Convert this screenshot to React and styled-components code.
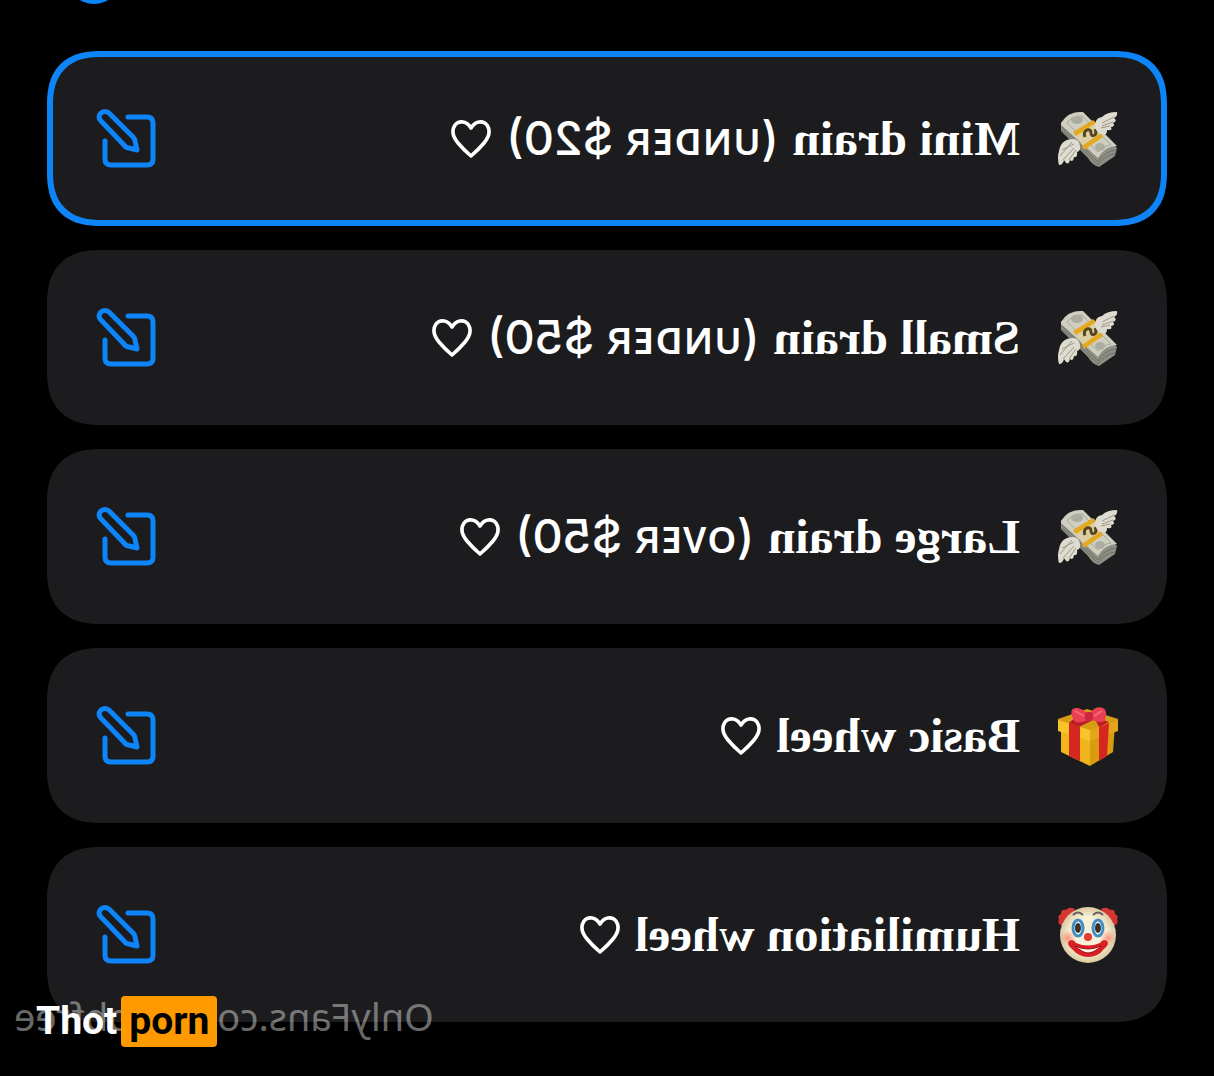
import React from "react";
import styled, { createGlobalStyle } from "styled-components";

const GlobalStyle = createGlobalStyle`
  * { box-sizing: border-box; }
  html, body { margin: 0; background: #000; overflow-x: hidden; }
`;

const Page = styled.main`
  position: relative;
  min-height: 100vh;
  overflow: hidden;
  background: #000;
`;

const Mirrored = styled.div`
  display: flex;
  flex-direction: column;
  gap: 47px;
  padding: 0 47px 53px;
  transform: scaleX(-1);
`;

const Handle = styled.div`
  width: 54px;
  height: 54px;
  margin: -50px 20px 0 0;
  align-self: flex-end;
  border-radius: 50%;
  background: #0d84f8;
`;

const List = styled.ul`
  display: flex;
  flex-direction: column;
  gap: 24px;
  margin: 0;
  padding: 0;
  list-style: none;
`;

const Card = styled.li`
  display: flex;
  align-items: center;
  height: 175px;
  padding: 0 42px;
  border: 6px solid ${(p) => (p.$selected ? "#0d84f8" : "#1c1c1e")};
  border-radius: 54px;
  corner-shape: superellipse(1.3);
  background: #1c1c1e;
`;

const Emoji = styled.svg`
  width: 62px;
  height: 62px;
  flex: none;
`;

const Label = styled.span`
  display: flex;
  align-items: baseline;
  gap: 14px;
  flex: 1;
  margin-left: 37px;
  color: #fff;
  font: 700 49px/62px "Liberation Serif", serif;
  white-space: nowrap;
`;

const Amount = styled.span`
  font: 500 47px/62px Inter, "Noto Sans", sans-serif;
`;

const HeartIcon = styled.svg`
  width: 42px;
  height: 40px;
  align-self: center;
`;

const EditButton = styled.button`
  display: flex;
  flex: none;
  padding: 0;
  border: 0;
  background: none;
  color: #0d84f8;
  cursor: pointer;
`;

const Watermark = styled.p`
  position: absolute;
  left: 14px;
  top: 994px;
  margin: 0;
  color: rgba(255, 255, 255, 0.42);
  font: 400 38px/44px "Noto Sans", sans-serif;
  white-space: nowrap;
  transform: scaleX(-1);
`;

const Brand = styled.div`
  position: absolute;
  left: 36px;
  top: 996px;
  display: flex;
  gap: 4px;
  color: #fff;
  font: 700 39px/51px Roboto, sans-serif;
`;

const BrandTag = styled.span`
  padding: 0 8px;
  border-radius: 4px;
  background: #ff9900;
  color: #000;
`;

function Money() {
  return (
    <Emoji viewBox="0 0 62 62" aria-hidden="true">
      <g transform="translate(62 0) scale(-1 1)">
        <path d="M4 15 Q11 3 24 4 L60 40 58 48 42 59 Q35 57 31 50 L4 23Z" fill="#8f8f85" />
        <path d="M4 15Q12 3 26 4L60 38Q48 38 41 50L4 17Z" fill="#cfcec1" />
        <path d="M10 15Q16 7 25 8L54 37Q46 38 41 44Z" fill="none" stroke="#a7a99a" strokeWidth="1" />
        <path d="M5 19 41 54Q48 43 59 42M5 22 41 57Q48 47 58 46" fill="none" stroke="#6f7068" strokeWidth="1" />
        <ellipse cx="20" cy="12" rx="6" ry="4" fill="#aaad9f" />
        <ellipse cx="43" cy="39" rx="5" ry="4" fill="#aaad9f" />
        <path d="M18 25 37 13 46 25 27 40Z" fill="#dccfa5" />
        <path d="M16 24 36 12 39 15 19 28ZM25 38 44 25 46 29 27 42Z" fill="#e5a91e" />
        <path d="M28 29Q26 24 30 22Q34 21 34 25Q34 29 38 27Q40 25 38 21" fill="none" stroke="#56451d" strokeWidth="3" />
        <path d="M38 20Q37 10 45 9Q50 4 60 4Q61 8 57 10Q61 13 56 15Q59 18 54 19Q56 23 50 22Q50 28 45 26Q42 27 38 20Z" fill="#dedbd0" />
        <path d="M23 38Q22 31 16 31Q4 31 2 43Q0 50 2 57Q6 57 7 52Q11 59 13 52Q16 55 17 49Q21 50 20 44Q24 43 23 38Z" fill="#dedbd0" />
        <path d="M57 9 45 15M56 14 45 18M53 18 44 20M17 36 5 42M17 40 6 52M19 42 12 52M15 34 3 48" stroke="#9e9788" strokeWidth="1" fill="none" />
      </g>
    </Emoji>
  );
}

function Gift() {
  return (
    <Emoji viewBox="0 0 62 62" aria-hidden="true">
      <path d="M4 20 29 32V61L6 47Z" fill="#d99b10" />
      <path d="M29 32 58 20V47L29 61Z" fill="#f0b51b" />
      <path d="M1 14 32 4 61 14V25L29 36 1 25Z" fill="#d89d16" />
      <path d="M1 15 29 25V36L1 26Z" fill="#e3a51b" />
      <path d="M29 25 61 15V26L29 36Z" fill="#fac329" />
      <path d="M10 18 20 22V56L12 51ZM39 22 50 18V51L39 56Z" fill="#d52622" />
      <path d="M10 17 38 7 50 18 40 22 24 14 20 22Z" fill="#ba1d23" />
      <path d="M29 8Q23 0 16 3Q11 5 14 15Q16 20 29 14Q43 21 46 14Q51 2 41 3Q36 4 32 8Z" fill="#e94055" />
      <rect x="26" y="7" width="8" height="9" rx="3" fill="#ce273f" />
      <path d="M17 6 25 11M44 6 35 11" stroke="#f66b77" strokeWidth="2" />
    </Emoji>
  );
}

function Clown() {
  return (
    <Emoji viewBox="0 0 62 62" aria-hidden="true">
      <defs>
        <radialGradient id="clown-face">
          <stop offset="0.65" stopColor="#f8f0d9" />
          <stop offset="1" stopColor="#d9c99f" />
        </radialGradient>
        <radialGradient id="clown-cheek">
          <stop offset="0" stopColor="#ff6b58" stopOpacity="0.7" />
          <stop offset="1" stopColor="#ff8b6b" stopOpacity="0" />
        </radialGradient>
      </defs>
      <path d="M18 5Q12 2 9 6Q4 5 4 10Q0 12 2 15Q0 20 4 21Q6 25 12 19ZM44 5Q50 2 53 6Q58 5 58 10Q62 12 60 15Q62 20 58 21Q56 25 50 19Z" fill="#d73532" />
      <circle cx="31" cy="31" r="28" fill="url(#clown-face)" />
      <circle cx="11" cy="34" r="8" fill="url(#clown-cheek)" />
      <circle cx="51" cy="34" r="8" fill="url(#clown-cheek)" />
      <ellipse cx="21" cy="24" rx="5" ry="8" fill="#fff" stroke="#438fc2" strokeWidth="3" />
      <ellipse cx="41" cy="24" rx="5" ry="8" fill="#fff" stroke="#438fc2" strokeWidth="3" />
      <ellipse cx="21" cy="24" rx="3" ry="5" fill="#3c302b" />
      <ellipse cx="41" cy="24" rx="3" ry="5" fill="#3c302b" />
      <path d="M16 11Q21 6 26 11M36 11Q41 6 46 11" fill="none" stroke="#68615b" strokeWidth="2" />
      <circle cx="31" cy="33" r="4" fill="#e33c31" />
      <path d="M12 37Q16 34 19 39Q31 44 43 39Q46 34 50 37Q53 40 47 45Q40 53 31 53Q21 53 15 45Q9 40 12 37Z" fill="#d91f22" />
      <path d="M18 42Q31 48 44 42Q36 49 31 49Q25 49 18 42Z" fill="#fff1e8" stroke="#9a1519" strokeWidth="1" />
    </Emoji>
  );
}

function Heart() {
  return (
    <HeartIcon viewBox="0 0 42 40" role="img" aria-label="heart">
      <path d="M21 9C17 2 9 1 5 6C1 12 3 18 8 24Q13 30 21 37Q29 30 34 24C39 18 41 12 37 6C33 1 25 2 21 9Z" fill="none" stroke="#fff" strokeWidth="3.6" strokeLinejoin="round" />
    </HeartIcon>
  );
}

function EditIcon() {
  return (
    <svg width="62" height="62" viewBox="0 0 62 62" fill="none" stroke="currentColor" strokeWidth="5" strokeLinecap="round" strokeLinejoin="round">
      <path d="M29 9H10Q4 9 4 15V51Q4 57 10 57H46Q52 57 52 51V33" />
      <path d="M20 42 22 33Q22 31 24 29L48 5Q52 2 56 5Q60 9 56 13L33 37Q31 40 28 40Z" />
    </svg>
  );
}

const wheels = [
  { icon: Money, name: "Mini drain", amount: "(ᴜɴᴅᴇʀ $20)", selected: true },
  { icon: Money, name: "Small drain", amount: "(ᴜɴᴅᴇʀ $50)" },
  { icon: Money, name: "Large drain", amount: "(ᴏᴠᴇʀ $50)" },
  { icon: Gift, name: "Basic wheel" },
  { icon: Clown, name: "Humiliation wheel" },
];

export default function App() {
  return (
    <Page>
      <GlobalStyle />
      <Mirrored>
        <Handle />
        <List>
          {wheels.map(({ icon: Icon, name, amount, selected }) => (
            <Card key={name} $selected={selected}>
              <Icon />
              <Label>
                {name}
                {amount && <Amount>{amount}</Amount>}
                <Heart />
              </Label>
              <EditButton type="button" aria-label={`Edit ${name}`}>
                <EditIcon />
              </EditButton>
            </Card>
          ))}
        </List>
      </Mirrored>
      <Watermark>OnlyFans.com/scobfree</Watermark>
      <Brand>
        Thot<BrandTag>porn</BrandTag>
      </Brand>
    </Page>
  );
}
